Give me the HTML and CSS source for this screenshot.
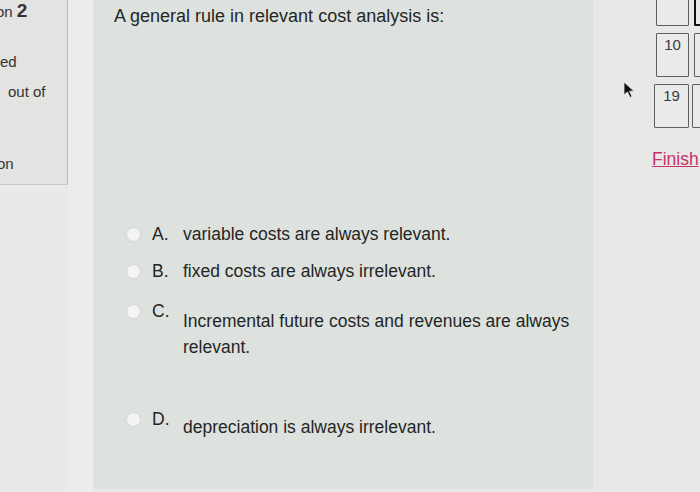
FILE: index.html
```html
<!DOCTYPE html>
<html>
<head>
<meta charset="utf-8">
<link rel="stylesheet" href="styles.css">
</head>
<body>
<div class="page">
  <aside class="info">
    <div class="qno">on <b>2</b></div>
    <div class="status">ed</div>
    <div class="marks">out of</div>
    <div class="flag">on</div>
  </aside>
  <div class="spacer"></div>
  <main class="question">
    <p class="qtext">A general rule in relevant cost analysis is:</p>
    <div class="answers">
      <div class="opt a"><span class="radio"></span><span class="lbl">A.</span><span class="txt">variable costs are always relevant.</span></div>
      <div class="opt b"><span class="radio"></span><span class="lbl">B.</span><span class="txt">fixed costs are always irrelevant.</span></div>
      <div class="opt raised c"><span class="radio"></span><span class="lbl">C.</span><span class="txt">Incremental future costs and revenues are always relevant.</span></div>
      <div class="opt raised d"><span class="radio"></span><span class="lbl">D.</span><span class="txt">depreciation is always irrelevant.</span></div>
    </div>
  </main>
  <nav class="navpanel">
    <div class="grid">
      <div class="cell top"></div><div class="cell top current"></div>
      <div class="cell">10</div><div class="cell"></div>
      <div class="cell shift">19</div><div class="cell shift"></div>
    </div>
    <a class="finish" href="#">Finish</a>
    <svg class="cursor" width="14" height="18" viewBox="0 0 14 18"><path d="M1 1 L1 14 L4.5 11 L7 16.5 L9 15.5 L6.6 10.2 L11 10.2 Z" fill="#111" stroke="#eee" stroke-width="0.8"/></svg>
  </nav>
</div>
</body>
</html>
```
FILE: styles.css
```css
html, body { margin: 0; padding: 0; }
body {
  width: 700px; height: 492px; overflow: hidden;
  font-family: "Liberation Sans", Arial, sans-serif;
  color: #242625;
  background: #e9e9e7;
}
.page { display: flex; height: 492px; }
.info {
  width: 67px; height: 184px; flex: none;
  background: #e3e3e1;
  border-right: 1px solid #b9bab8;
  border-bottom: 1px solid #c9cac8;
  overflow: hidden;
  font-size: 15px; color: #333;
  white-space: nowrap;
}
.qno { margin-left: -4px; margin-top: 0; font-size: 15px; line-height: 22px; }
.qno b { font-size: 19px; font-weight: bold; }
.status { margin-left: 0; margin-top: 30px; line-height: 18px; }
.marks { margin-left: 8px; margin-top: 12px; line-height: 18px; }
.flag { margin-left: -3px; margin-top: 54px; line-height: 18px; }
.spacer { width: 25px; flex: none; background: #ececea; }
.question {
  width: 500px; flex: none;
  background: #dde2df;
  padding: 5px 0 0 21px;
  box-sizing: border-box;
  height: 489px;
}
.qtext { margin: 0; font-size: 18px; line-height: 22px; }
.answers { margin-top: 195px; padding-left: 12px; font-size: 17.5px; }
.opt { display: flex; align-items: flex-start; line-height: 24px; }
.opt.a { margin-bottom: 13px; }
.opt.b { margin-bottom: 16px; }
.opt.c { margin-bottom: 47px; }
.radio {
  width: 13px; height: 13px; border-radius: 50%;
  background: #f3f4f3; border: 1px solid #d3d6d4;
  flex: none; margin-right: 11px; margin-top: 5px;
}
.lbl { width: 31px; flex: none; }
.txt { width: 400px; }
.raised .txt { margin-top: 9px; line-height: 26px; }
.d .txt { margin-top: 7px; }
.navpanel { flex: 1; position: relative; background: #e8e8e6; }
.grid {
  display: grid; grid-template-columns: 33px 33px; gap: 7px 5px;
  margin-left: 63px; margin-top: -18px;
}
.cell {
  height: 44px; box-sizing: border-box;
  border: 1.5px solid #5d5f5e; border-radius: 1px;
  text-align: center; font-size: 15px; padding-top: 2px; color: #3a3a3a;
  background: #eaeaea;
}
.cell.current { border: 2px solid #111; }
.cell.shift { margin-left: -2px; }
.finish {
  display: block; margin-left: 59px; margin-top: 21px; padding-right: 10px;
  color: #c5336c; font-size: 17.5px; white-space: nowrap;
  text-decoration: underline;
}
.cursor { position: absolute; left: 30px; top: 81px; }
```
